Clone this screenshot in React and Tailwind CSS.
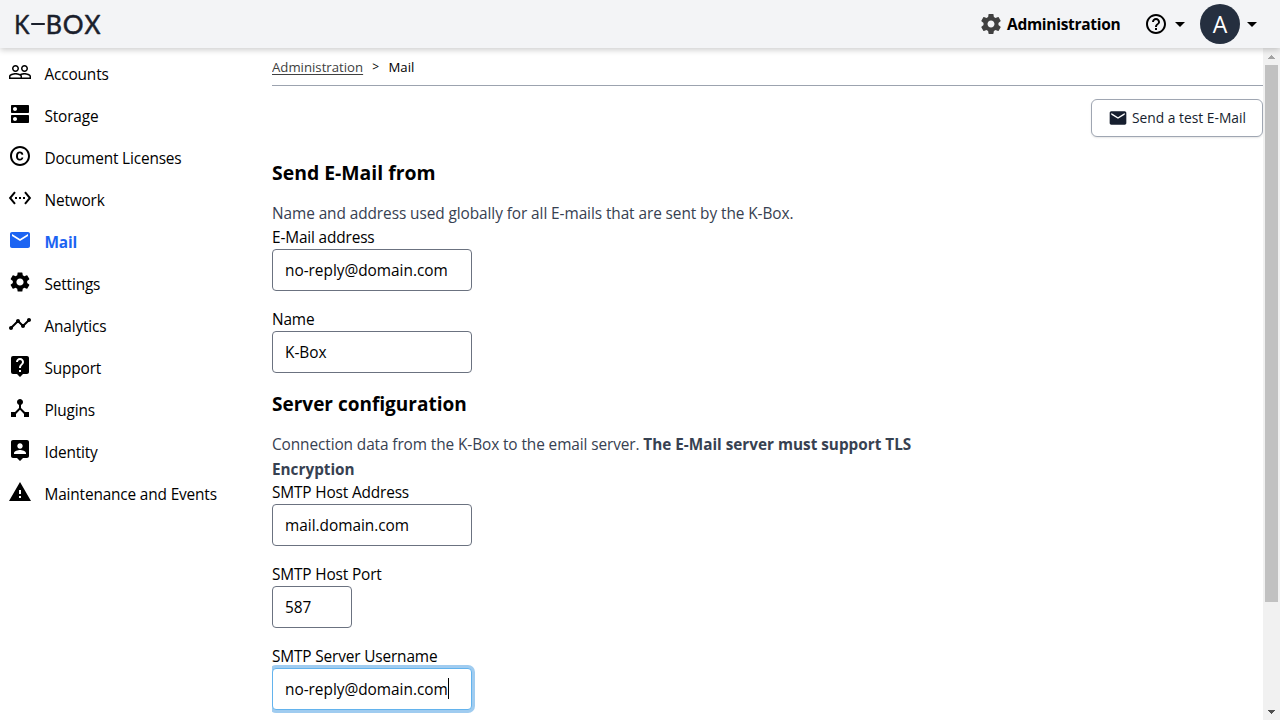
import {
  MdPeopleOutline,
  MdDns,
  MdCopyright,
  MdSettingsEthernet,
  MdEmail,
  MdSettings,
  MdTimeline,
  MdLiveHelp,
  MdDeviceHub,
  MdWarning,
  MdHelpOutline,
  MdArrowDropDown,
} from 'react-icons/md';

function PersonPinIcon({ size = 24 }) {
  return (
    <svg width={size} height={size} viewBox="0 0 24 24" fill="currentColor">
      <path d="M19 2H5c-1.11 0-2 .9-2 2v14c0 1.1.89 2 2 2h4l3 3 3-3h4c1.1 0 2-.9 2-2V4c0-1.1-.9-2-2-2zm-7 3.3c1.49 0 2.7 1.21 2.7 2.7 0 1.49-1.21 2.7-2.7 2.7-1.49 0-2.7-1.21-2.7-2.7 0-1.49 1.21-2.7 2.7-2.7zM18 16H6v-.9c0-2 4-3.1 6-3.1s6 1.1 6 3.1v.9z" />
    </svg>
  );
}

function GearIcon({ size = 24 }) {
  return (
    <svg width={size} height={size} viewBox="0 0 24 24" fill="currentColor">
      <path d="M19.43 12.98c.04-.32.07-.64.07-.98s-.03-.66-.07-.98l2.11-1.65c.19-.15.24-.42.12-.64l-2-3.46c-.12-.22-.39-.3-.61-.22l-2.49 1c-.52-.4-1.08-.73-1.69-.98l-.38-2.65C14.46 2.18 14.25 2 14 2h-4c-.25 0-.46.18-.49.42l-.38 2.65c-.61.25-1.17.59-1.69.98l-2.49-1c-.23-.09-.49 0-.61.22l-2 3.46c-.13.22-.07.49.12.64l2.11 1.65c-.04.32-.07.65-.07.98s.03.66.07.98l-2.11 1.65c-.19.15-.24.42-.12.64l2 3.46c.12.22.39.3.61.22l2.49-1c.52.4 1.08.73 1.69.98l.38 2.65c.03.24.24.42.49.42h4c.25 0 .46-.18.49-.42l.38-2.65c.61-.25 1.17-.59 1.69-.98l2.49 1c.23.09.49 0 .61-.22l2-3.46c.12-.22.07-.49-.12-.64l-2.11-1.65zM12 15.5c-1.93 0-3.5-1.57-3.5-3.5s1.57-3.5 3.5-3.5 3.5 1.57 3.5 3.5-1.57 3.5-3.5 3.5z" />
    </svg>
  );
}

const navItems = [
  { label: 'Accounts', icon: MdPeopleOutline },
  { label: 'Storage', icon: MdDns },
  { label: 'Document Licenses', icon: MdCopyright },
  { label: 'Network', icon: MdSettingsEthernet },
  { label: 'Mail', icon: MdEmail, active: true },
  { label: 'Settings', icon: MdSettings },
  { label: 'Analytics', icon: MdTimeline },
  { label: 'Support', icon: MdLiveHelp },
  { label: 'Plugins', icon: MdDeviceHub },
  { label: 'Identity', icon: PersonPinIcon },
  { label: 'Maintenance and Events', icon: MdWarning },
];

const logoLetters = [
  { char: 'K', x: 0.3, length: 15.2 },
  { char: 'B', x: 31.8, length: 16.2 },
  { char: 'O', x: 48.8, length: 20.8 },
  { char: 'X', x: 70.4, length: 16 },
];

function Logo() {
  return (
    <svg
      width="92"
      height="40"
      viewBox="0 0 92 40"
      className="overflow-visible font-['Lato',sans-serif]"
      fill="#1a202c"
      stroke="#1a202c"
      strokeWidth="0.5"
      strokeLinejoin="round"
      fontSize="26.5"
    >
      {logoLetters.map(({ char, x, length }) => (
        <text key={char} x={x} y="29.5" textLength={length} lengthAdjust="spacingAndGlyphs">
          {char}
        </text>
      ))}
      <line x1="18" y1="20" x2="30" y2="20" strokeWidth="2.2" strokeLinecap="round" />
    </svg>
  );
}

function Header() {
  return (
    <header className="relative z-10 flex h-12 shrink-0 items-center justify-between bg-[#f3f4f6] pl-[14px] shadow-[0_2px_6px_rgba(0,0,0,0.2)]">
      <Logo />
      <div className="flex items-center pr-4">
        <span className="text-[#404040]">
          <GearIcon />
        </span>
        <span className="ml-1 w-[113px] text-[15.5px] font-bold tracking-[-0.29px] whitespace-nowrap">
          Administration
        </span>
        <span className="ml-6 flex items-center">
          <MdHelpOutline size={24} />
          <MdArrowDropDown size={24} />
        </span>
        <span className="ml-2 flex size-10 items-center justify-center rounded-full bg-[#252f3f] text-[23px] leading-[22px] text-white">
          A
        </span>
        <MdArrowDropDown size={24} />
      </div>
    </header>
  );
}

function Sidebar() {
  return (
    <nav className="flex w-[272px] shrink-0 flex-col pt-[5px] pl-2 tracking-[-0.16px]">
      {navItems.map(({ label, icon: Icon, active }) => (
        <a
          key={label}
          className={`flex h-[42px] items-center gap-[12.5px] ${active ? 'font-bold text-[#1c64f2]' : ''}`}
        >
          <span className="pb-1">
            <Icon size={24} />
          </span>
          <span className="pt-0.5">{label}</span>
        </a>
      ))}
    </nav>
  );
}

function Field({ label, value, width = 'w-[200px]', focused }) {
  return (
    <div className="mb-4 flex flex-col">
      <label className="h-6 leading-[26px] tracking-[-0.15px]">{label}</label>
      <div
        className={`${width} flex h-[42px] items-center rounded border bg-white px-3 ${
          focused ? 'border-[#63b3ed] shadow-[0_0_0_3px_rgba(66,153,225,0.5)]' : 'border-[#6b7280]'
        }`}
      >
        <span className="pt-0.5 tracking-[-0.02px]">{value}</span>
        {focused && <span className="mb-0.5 h-[21px] w-px bg-black" />}
      </div>
    </div>
  );
}

function ScrollBar() {
  return (
    <div className="flex w-[17px] shrink-0 flex-col items-center bg-[#f1f1f1]">
      <div className="flex h-[17px] items-center">
        <svg width="7" height="4" viewBox="0 0 7 4" fill="#a3a3a3" shapeRendering="crispEdges">
          <path d="M3 0h1v1h1v1h1v1h1v1H0V3h1V2h1V1h1z" />
        </svg>
      </div>
      <div className="h-[537px] w-[13px] bg-[#c1c1c1]" />
      <div className="mt-auto flex h-[17px] items-center">
        <svg width="7" height="4" viewBox="0 0 7 4" fill="#505050" shapeRendering="crispEdges">
          <path d="M0 0h7v1H6v1H5v1H4v1H3V3H2V2H1V1H0z" />
        </svg>
      </div>
    </div>
  );
}

export default function App() {
  return (
    <div className="flex h-[720px] w-[1280px] flex-col overflow-hidden bg-white font-['Open_Sans',sans-serif] text-[15.4px] leading-6 text-black">
      <Header />
      <div className="flex min-h-0 flex-1">
        <Sidebar />
        <main className="flex min-w-0 flex-1 flex-col overflow-hidden">
          <div className="flex h-[38px] shrink-0 items-center border-b border-[#9ca3af] text-[13.2px]">
            <a className="text-[#404040] underline underline-offset-2">Administration</a>
            <span className="ml-[9px] text-[12px]">&gt;</span>
            <span className="ml-[9.5px]">Mail</span>
          </div>
          <div className="mt-[13px] flex shrink-0 justify-end">
            <button className="flex h-[38px] w-[172px] items-center gap-1 rounded-md border border-[#9fa6b2] bg-white pl-4 text-[13.8px] whitespace-nowrap text-[#161e2e] shadow-[0_1px_2px_rgba(0,0,0,0.1)]">
              <MdEmail size={20} className="shrink-0" />
              <span>Send a test E-Mail</span>
            </button>
          </div>
          <section className="mt-[21px] w-[660px] shrink-0">
            <h2 className="h-[30px] text-[19.4px] leading-[30px] font-bold">Send E-Mail from</h2>
            <p className="mt-[13px] h-6 leading-[26px] tracking-[-0.08px] text-[#374151]">
              Name and address used globally for all E-mails that are sent by the K-Box.
            </p>
            <Field label="E-Mail address" value="no-reply@domain.com" />
            <Field label="Name" value="K-Box" />
          </section>
          <section className="w-[660px] shrink-0">
            <h2 className="h-[30px] text-[19px] leading-[30px] font-bold">Server configuration</h2>
            <p className="mt-[13px] h-12 text-[#374151]">
              <span className="tracking-[-0.1px]">Connection data from the K-Box to the email server. </span>
              <b className="text-[15.3px] font-bold">
                The E-Mail server must support TLS
                <br />
                Encryption
              </b>
            </p>
            <Field label="SMTP Host Address" value="mail.domain.com" />
            <Field label="SMTP Host Port" value="587" width="w-[80px]" />
            <Field label="SMTP Server Username" value="no-reply@domain.com" focused />
          </section>
        </main>
        <ScrollBar />
      </div>
    </div>
  );
}
